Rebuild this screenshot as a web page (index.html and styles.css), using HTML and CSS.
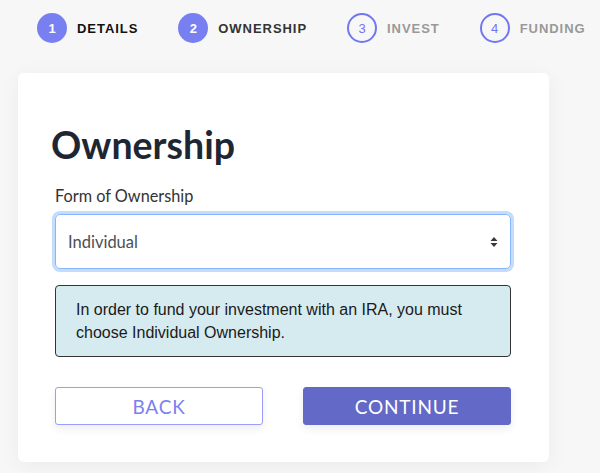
FILE: index.html
```html
<!DOCTYPE html>
<html lang="en">
<head>
<meta charset="utf-8">
<title>Ownership</title>
<link rel="stylesheet" href="styles.css">
</head>
<body>
<nav class="steps">
  <div class="step done"><span class="num">1</span><span class="label">DETAILS</span></div>
  <div class="step current"><span class="num">2</span><span class="label">OWNERSHIP</span></div>
  <div class="step todo"><span class="num">3</span><span class="label">INVEST</span></div>
  <div class="step todo"><span class="num">4</span><span class="label">FUNDING</span></div>
</nav>
<main class="card">
  <h1 class="title">Ownership</h1>
  <div class="field-label">Form of Ownership</div>
  <div class="select">
    <span class="select-value">Individual</span>
    <svg class="select-arrows" width="8" height="12" viewBox="0 0 8 12"><path d="M0.5 5 L4 1 L7.5 5 Z M0.5 7 L7.5 7 L4 11 Z" fill="#343a40"/></svg>
  </div>
  <div class="notice">In order to fund your investment with an IRA, you must choose Individual Ownership.</div>
  <div class="actions">
    <button class="btn btn-outline">BACK</button>
    <button class="btn btn-primary">CONTINUE</button>
  </div>
</main>
</body>
</html>
```
FILE: styles.css
```css
html, body {
  margin: 0;
  padding: 0;
}
body {
  background: #f7f7f7;
  width: 600px;
  height: 473px;
  overflow: hidden;
  font-family: Lato, "Noto Sans", sans-serif;
}
.steps {
  display: flex;
  align-items: center;
  gap: 40px;
  padding: 13px 0 0 37px;
  height: 30px;
}
.step {
  display: flex;
  align-items: center;
  gap: 10px;
}
.num {
  width: 30px;
  height: 30px;
  box-sizing: border-box;
  border-radius: 50%;
  display: flex;
  align-items: center;
  justify-content: center;
  font-family: "Liberation Sans", Arial, sans-serif;
  font-size: 13px;
  font-weight: bold;
}
.step .label {
  font-family: "Liberation Sans", Arial, sans-serif;
  font-size: 13px;
  font-weight: bold;
  letter-spacing: 0.95px;
}
.done .num, .current .num {
  background: #787ff1;
  color: #fff;
}
.todo .num {
  border: 2px solid #7077f0;
  color: #6f76ee;
  font-weight: normal;
}
.done .label { color: #111; }
.current .label { color: #333; }
.todo .label { color: #999; }

.card {
  margin: 30px 0 0 18px;
  width: 531px;
  box-sizing: border-box;
  background: #fff;
  border-radius: 6px;
  box-shadow: 0 4px 22px rgba(0, 0, 0, 0.05);
  padding: 50px 38px 37px 37px;
}
.title {
  margin: 0 0 0 -4px;
  font-size: 37.5px;
  line-height: 44px;
  font-weight: 700;
  color: #1f2633;
}
.field-label {
  margin-top: 19px;
  font-size: 16.3px;
  line-height: 20px;
  color: #333;
}
.select {
  margin-top: 8px;
  height: 55px;
  box-sizing: border-box;
  border: 1px solid #86b7fe;
  border-radius: 5px;
  box-shadow: 0 0 0 3px #c6dcfc;
  display: flex;
  align-items: center;
  justify-content: space-between;
  padding: 0 12px 0 12px;
}
.select-value {
  font-size: 16.5px;
  color: #4a4f55;
}
.notice {
  margin-top: 16px;
  background: #d6ebf0;
  border: 1px solid #333;
  border-radius: 4px;
  padding: 12px 20px 12px 20px;
  font-family: "Liberation Sans", Arial, sans-serif;
  font-size: 16px;
  line-height: 23px;
  color: #1a1a1a;
}
.actions {
  margin-top: 30px;
  display: grid;
  grid-template-columns: 1fr 1fr;
  gap: 40px;
}
.btn {
  height: 38px;
  box-sizing: border-box;
  border-radius: 3px;
  font-family: Lato, "Noto Sans", sans-serif;
  font-size: 19px;
  letter-spacing: 0.8px;
  box-shadow: 0 4px 8px rgba(0, 0, 0, 0.07);
  padding: 0;
  cursor: pointer;
}
.btn-outline {
  background: #fff;
  border: 1px solid #9a9ef8;
  color: #7b80f0;
}
.btn-primary {
  background: #6369c6;
  border: 1px solid #6369c6;
  color: #fff;
}
```
